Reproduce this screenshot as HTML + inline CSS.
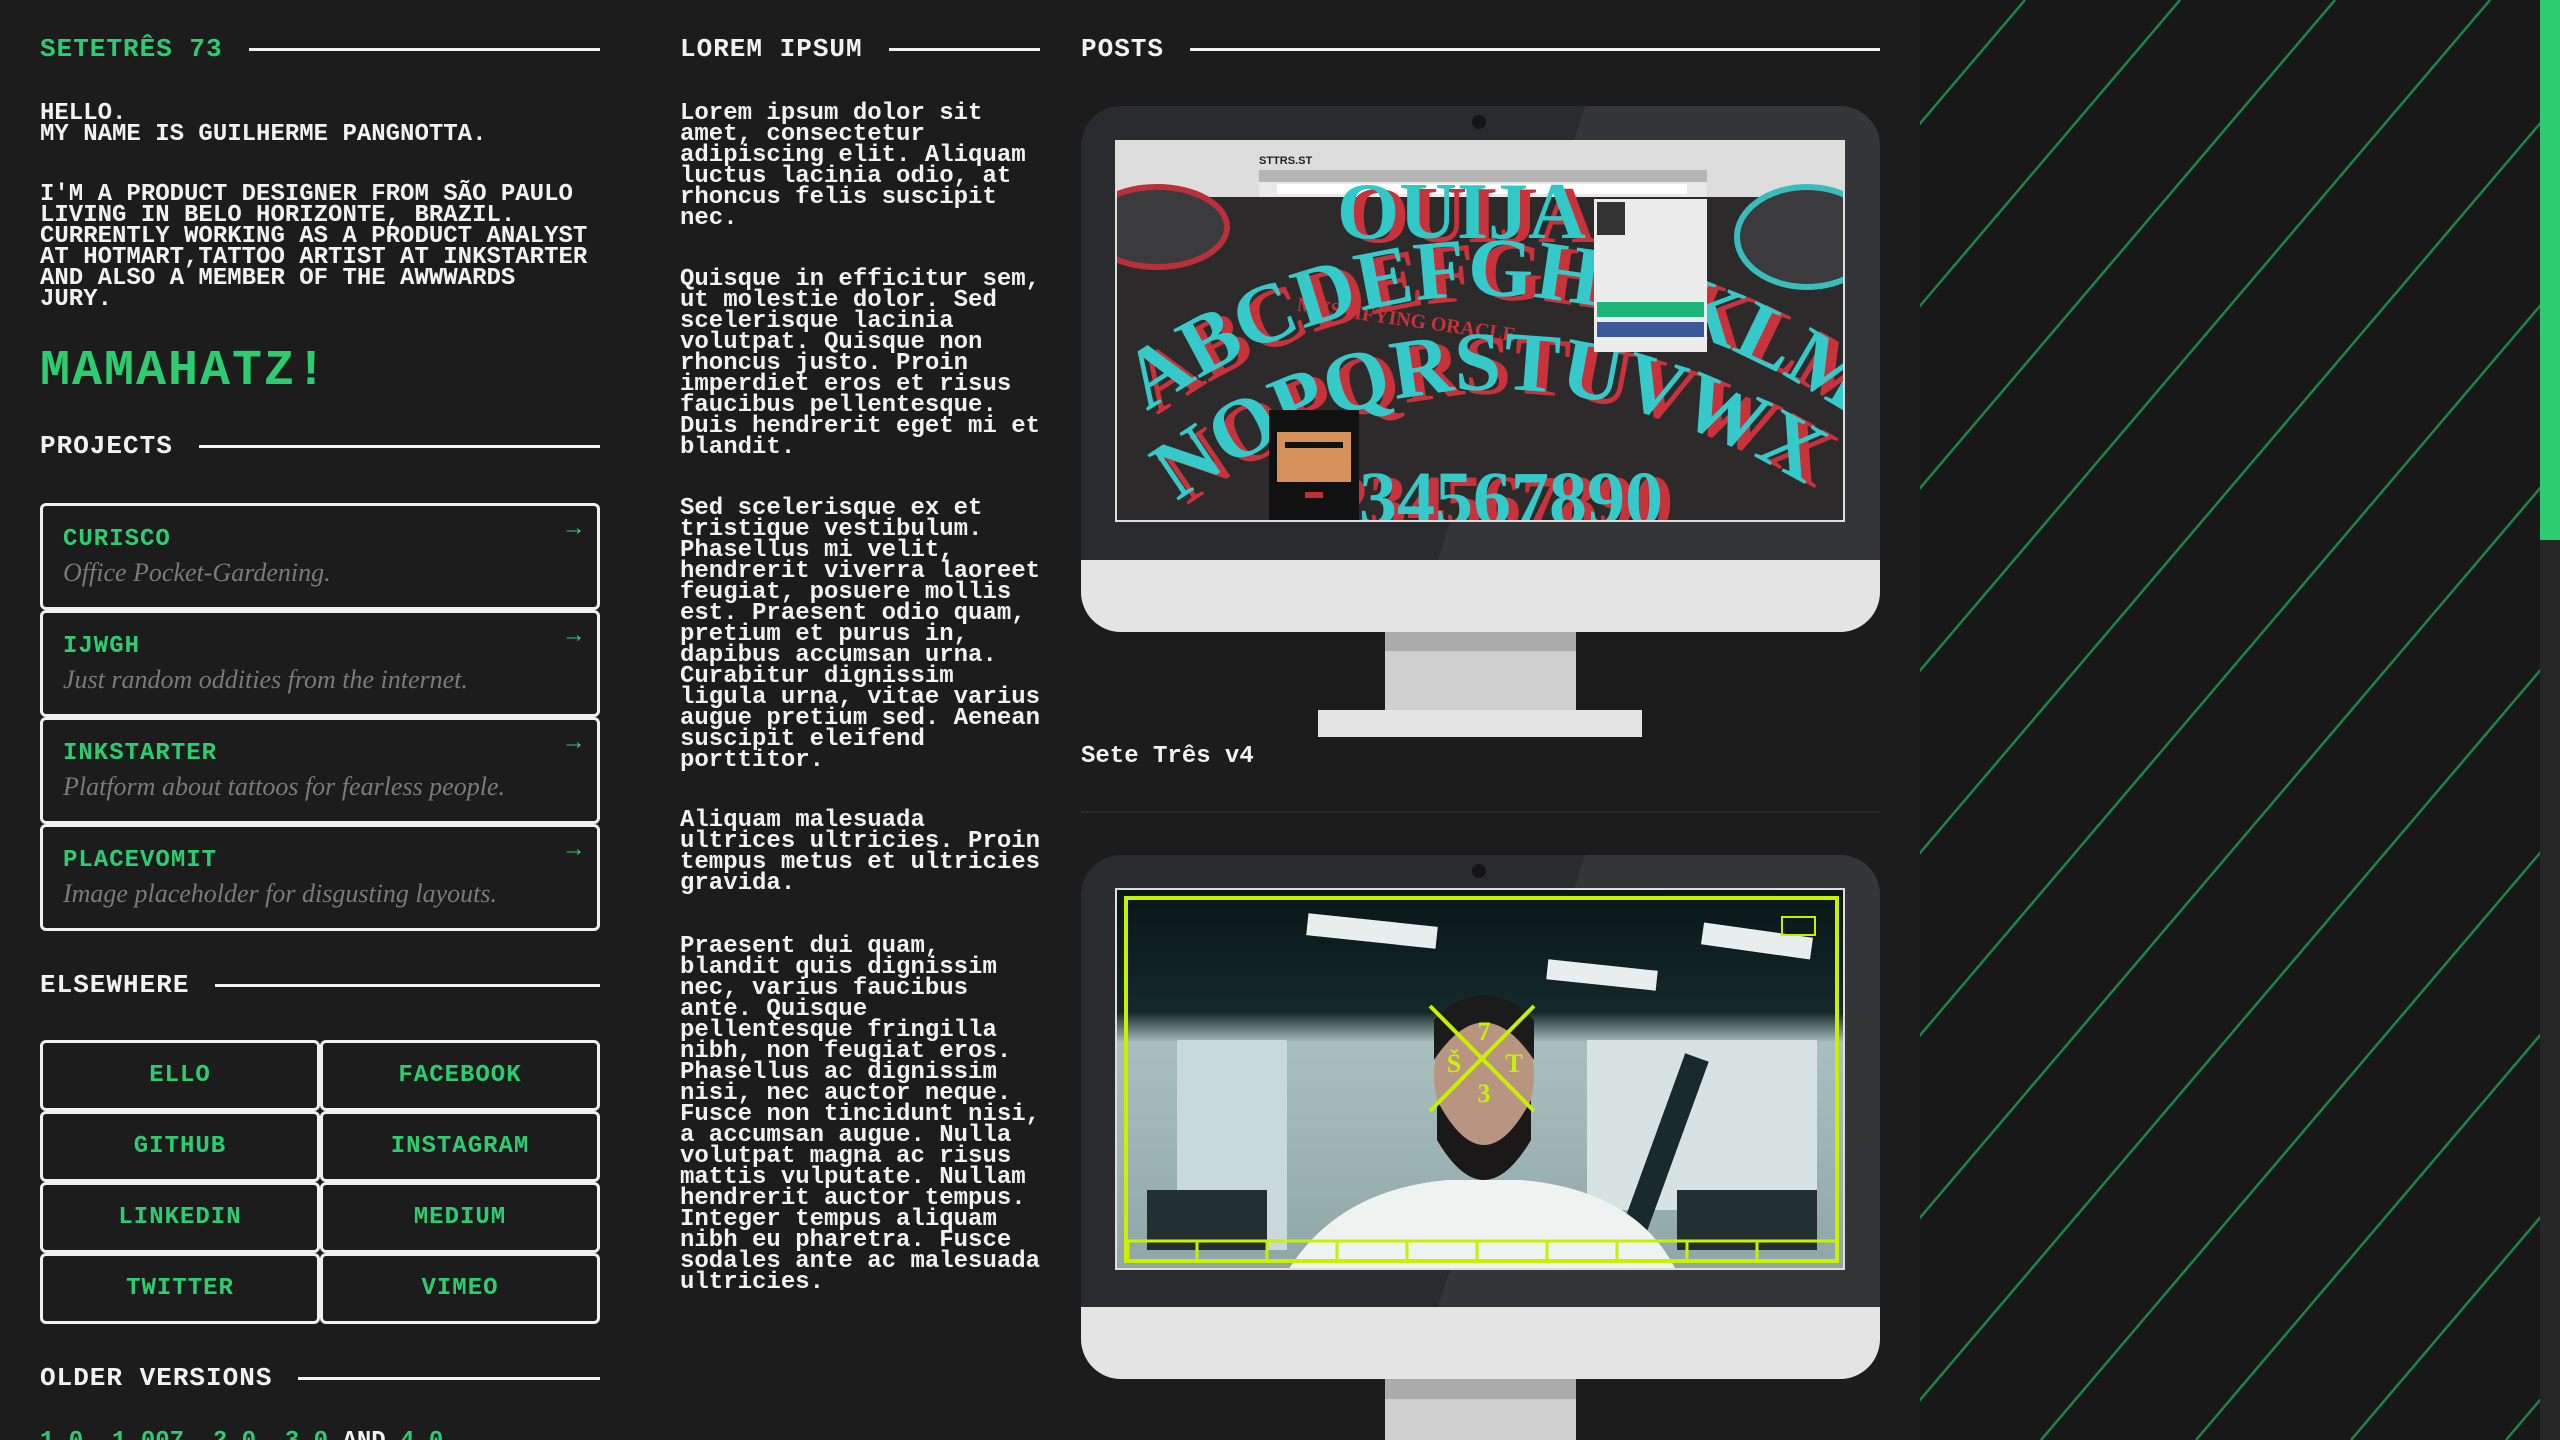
<!DOCTYPE html>
<html><head><meta charset="utf-8">
<style>
*{margin:0;padding:0;box-sizing:border-box}
html,body{width:2560px;height:1440px;overflow:hidden;background:#1c1c1c}
body{position:relative;font-family:"Liberation Mono",monospace;font-weight:bold;color:#f2f2f2}
.a{position:absolute}
.t{font-size:24px;line-height:21px;white-space:pre}
.g{color:#2ecc71}
.h{position:absolute;display:flex;align-items:center;font-size:26px;height:30px;letter-spacing:1px}
.h i{flex:1;height:3px;background:#f2f2f2;margin-left:26px}
.card{position:absolute;left:40px;width:560px;height:107px;border:3px solid #f0f0f0;border-radius:6px;background:#1c1c1c}
.card b{position:absolute;left:20px;top:20px;font-size:24px;color:#2ecc71;letter-spacing:1px}
.card em{position:absolute;left:20px;top:52px;font-family:"Liberation Serif",serif;font-style:italic;font-weight:normal;font-size:26px;color:#7a7a7a}
.card s{position:absolute;right:16px;top:10px;text-decoration:none;color:#2ecc71;font-size:24px;font-weight:normal}
.btn{position:absolute;width:280px;height:71px;border:3px solid #f0f0f0;border-radius:6px;color:#2ecc71;font-size:24px;display:flex;align-items:center;justify-content:center;letter-spacing:1px}
.mon{position:absolute;left:1081px;width:799px;border-radius:40px;overflow:hidden;background:#2a2b2e}
.mon .gl{position:absolute;left:0;top:0;right:0;bottom:0;background:linear-gradient(108deg,transparent 0 52%,rgba(255,255,255,.05) 52%)}
.mon .chin{position:absolute;left:0;right:0;bottom:0;height:72px;background:#e4e4e4}
.mon .cam{position:absolute;left:391px;width:14px;height:14px;border-radius:50%;background:#151515}
.scr{position:absolute;left:34px;width:730px;height:382px;border:2px solid #ddd;overflow:hidden}
</style></head><body>

<!-- stripes -->
<div class="a" style="left:1920px;top:0;width:620px;height:1440px;background:#181818;overflow:hidden">
<svg width="620" height="1440" style="position:absolute;left:0;top:0">
<g stroke="#1e8548" stroke-width="2.5" transform="translate(-1920,0)">
<line x1="1870" y1="0" x2="646" y2="1440"/><line x1="2025" y1="0" x2="801" y2="1440"/><line x1="2180" y1="0" x2="956" y2="1440"/><line x1="2335" y1="0" x2="1111" y2="1440"/><line x1="2490" y1="0" x2="1266" y2="1440"/><line x1="2645" y1="0" x2="1421" y2="1440"/><line x1="2800" y1="0" x2="1576" y2="1440"/><line x1="2955" y1="0" x2="1731" y2="1440"/><line x1="3110" y1="0" x2="1886" y2="1440"/><line x1="3265" y1="0" x2="2041" y2="1440"/><line x1="3420" y1="0" x2="2196" y2="1440"/><line x1="3575" y1="0" x2="2351" y2="1440"/><line x1="3730" y1="0" x2="2506" y2="1440"/><line x1="3885" y1="0" x2="2661" y2="1440"/>
</g></svg></div>
<div class="a" style="left:2540px;top:0;width:20px;height:1440px;background:#262626"></div>
<div class="a" style="left:2540px;top:0;width:20px;height:540px;background:#2ecc71"></div>

<!-- left column -->
<div class="h" style="left:40px;top:34px;width:560px"><span class="g">SETETRÊS 73</span><i></i></div>
<div class="a t" style="left:40px;top:103px">HELLO.
MY NAME IS GUILHERME PANGNOTTA.</div>
<div class="a t" style="left:40px;top:184px">I'M A PRODUCT DESIGNER FROM SÃO PAULO
LIVING IN BELO HORIZONTE, BRAZIL.
CURRENTLY WORKING AS A PRODUCT ANALYST
AT HOTMART,TATTOO ARTIST AT INKSTARTER
AND ALSO A MEMBER OF THE AWWWARDS
JURY.</div>
<div class="a g" style="left:40px;top:342px;font-size:50px;line-height:60px;letter-spacing:2px">MAMAHATZ!</div>
<div class="h" style="left:40px;top:431px;width:560px"><span>PROJECTS</span><i></i></div>

<div class="card" style="top:503px"><b>CURISCO</b><em>Office Pocket-Gardening.</em><s>→</s></div>
<div class="card" style="top:610px"><b>IJWGH</b><em>Just random oddities from the internet.</em><s>→</s></div>
<div class="card" style="top:717px"><b>INKSTARTER</b><em>Platform about tattoos for fearless people.</em><s>→</s></div>
<div class="card" style="top:824px"><b>PLACEVOMIT</b><em>Image placeholder for disgusting layouts.</em><s>→</s></div>

<div class="h" style="left:40px;top:970px;width:560px"><span>ELSEWHERE</span><i></i></div>
<div class="btn" style="left:40px;top:1040px">ELLO</div>
<div class="btn" style="left:320px;top:1040px">FACEBOOK</div>
<div class="btn" style="left:40px;top:1111px">GITHUB</div>
<div class="btn" style="left:320px;top:1111px">INSTAGRAM</div>
<div class="btn" style="left:40px;top:1182px">LINKEDIN</div>
<div class="btn" style="left:320px;top:1182px">MEDIUM</div>
<div class="btn" style="left:40px;top:1253px">TWITTER</div>
<div class="btn" style="left:320px;top:1253px">VIMEO</div>

<div class="h" style="left:40px;top:1363px;width:560px"><span>OLDER VERSIONS</span><i></i></div>
<div class="a t" style="left:40px;top:1431px"><span class="g">1.0, 1.007, 2.0, 3.0</span> AND <span class="g">4.0</span></div>

<!-- middle column -->
<div class="h" style="left:680px;top:34px;width:360px"><span>LOREM IPSUM</span><i></i></div>
<div class="a t" style="left:680px;top:103px">Lorem ipsum dolor sit
amet, consectetur
adipiscing elit. Aliquam
luctus lacinia odio, at
rhoncus felis suscipit
nec.</div>
<div class="a t" style="left:680px;top:269px">Quisque in efficitur sem,
ut molestie dolor. Sed
scelerisque lacinia
volutpat. Quisque non
rhoncus justo. Proin
imperdiet eros et risus
faucibus pellentesque.
Duis hendrerit eget mi et
blandit.</div>
<div class="a t" style="left:680px;top:498px">Sed scelerisque ex et
tristique vestibulum.
Phasellus mi velit,
hendrerit viverra laoreet
feugiat, posuere mollis
est. Praesent odio quam,
pretium et purus in,
dapibus accumsan urna.
Curabitur dignissim
ligula urna, vitae varius
augue pretium sed. Aenean
suscipit eleifend
porttitor.</div>
<div class="a t" style="left:680px;top:810px">Aliquam malesuada
ultrices ultricies. Proin
tempus metus et ultricies
gravida.</div>
<div class="a t" style="left:680px;top:936px">Praesent dui quam,
blandit quis dignissim
nec, varius faucibus
ante. Quisque
pellentesque fringilla
nibh, non feugiat eros.
Phasellus ac dignissim
nisi, nec auctor neque.
Fusce non tincidunt nisi,
a accumsan augue. Nulla
volutpat magna ac risus
mattis vulputate. Nullam
hendrerit auctor tempus.
Integer tempus aliquam
nibh eu pharetra. Fusce
sodales ante ac malesuada
ultricies.</div>

<!-- posts column -->
<div class="h" style="left:1081px;top:34px;width:799px"><span>POSTS</span><i></i></div>

<!-- monitor 1 -->
<div class="a" style="left:1385px;top:630px;width:191px;height:80px;background:#cfcfcf"></div>
<div class="a" style="left:1385px;top:630px;width:191px;height:21px;background:#ababab"></div>
<div class="a" style="left:1318px;top:710px;width:324px;height:27px;background:#e4e4e4"></div>
<div class="mon" style="top:106px;height:526px">
 <div class="gl"></div><div class="chin"></div><div class="cam" style="top:9px"></div>
 <div class="scr" style="top:34px;background:#2b2b2d">
  <svg width="730" height="382" viewBox="0 0 730 382" style="display:block">
   <defs>
    <path id="a1" d="M30 270 Q360 40 720 265"/>
    <path id="a2" d="M60 360 Q360 140 700 350"/>
   </defs>
   <rect x="0" y="0" width="730" height="55" fill="#dcdcdc"/>
   <rect x="142" y="28" width="448" height="12" fill="#b5b5b5"/>
   <rect x="142" y="40" width="448" height="15" fill="#e9e9e9"/>
   <rect x="160" y="42" width="410" height="10" fill="#fff"/>
   <text x="142" y="22" font-family="Liberation Sans" font-weight="bold" font-size="11" fill="#222">STTRS.ST</text>
   <rect x="0" y="55" width="730" height="327" fill="#2d2a2c"/>
   <ellipse cx="40" cy="85" rx="70" ry="40" fill="#3b3a3d" stroke="#b83038" stroke-width="6"/>
   <ellipse cx="690" cy="95" rx="70" ry="50" fill="#3b3a3d" stroke="#3bbcbc" stroke-width="6"/>
   <text x="230" y="100" font-family="Liberation Serif" font-weight="bold" font-size="80" fill="#c8323a">OUIJA</text>
   <text x="220" y="96" font-family="Liberation Serif" font-weight="bold" font-size="80" fill="#31c8c8">OUIJA</text>
   <text x="180" y="180" font-family="Liberation Serif" font-weight="bold" font-size="20" fill="#c8323a" transform="rotate(8 260 170)">MYSTIFYING ORACLE</text>
   <g font-family="Liberation Serif" font-weight="bold" font-size="84">
    <text fill="#c8323a" transform="translate(10,4)"><textPath href="#a1">ABCDEFGHIJKLM</textPath></text>
    <text fill="#36c9c9"><textPath href="#a1">ABCDEFGHIJKLM</textPath></text>
    <text fill="#c8323a" transform="translate(10,4)"><textPath href="#a2">NOPQRSTUVWXYZ</textPath></text>
    <text fill="#36c9c9"><textPath href="#a2">NOPQRSTUVWXYZ</textPath></text>
   </g>
   <g font-family="Liberation Serif" font-weight="bold" font-size="76">
    <text x="176" y="386" fill="#c8323a">1234567890</text>
    <text x="166" y="382" fill="#36c9c9">1234567890</text>
   </g>
   <rect x="477" y="57" width="113" height="153" fill="#ececec"/>
   <rect x="480" y="60" width="28" height="33" fill="#333"/>
   <rect x="480" y="160" width="107" height="15" fill="#1fb57a"/>
   <rect x="480" y="180" width="107" height="15" fill="#3b5998"/>
   <g>
    <rect x="152" y="268" width="90" height="114" fill="#111"/>
    <rect x="160" y="290" width="74" height="60" fill="#d6905a"/>
    <rect x="168" y="300" width="58" height="6" fill="#111"/>
    <rect x="160" y="340" width="74" height="42" fill="#111"/>
    <rect x="188" y="350" width="18" height="6" fill="#c03030"/>
   </g>
  </svg>
 </div>
</div>
<div class="a" style="left:1081px;top:744px;font-size:24px;line-height:26px;white-space:pre">Sete Três v4</div>
<div class="a" style="left:1081px;top:811px;width:799px;height:2px;background:#2a2a2a"></div>

<!-- monitor 2 -->
<div class="a" style="left:1385px;top:1376px;width:191px;height:64px;background:#cfcfcf"></div>
<div class="a" style="left:1385px;top:1376px;width:191px;height:23px;background:#ababab"></div>
<div class="mon" style="top:855px;height:524px">
 <div class="gl"></div><div class="chin"></div><div class="cam" style="top:9px"></div>
 <div class="scr" style="top:33px;height:382px;background:#9fb4b4">
  <svg width="730" height="382" viewBox="0 0 730 382" style="display:block">
   <defs><linearGradient id="bg2" x1="0" y1="0" x2="0" y2="1">
    <stop offset="0" stop-color="#0a1618"/><stop offset=".32" stop-color="#14282a"/><stop offset=".4" stop-color="#a9bfbf"/><stop offset="1" stop-color="#8fa6a8"/></linearGradient></defs>
   <rect width="730" height="382" fill="url(#bg2)"/>
   <rect x="190" y="30" width="130" height="22" fill="#e8eeee" transform="rotate(6 255 41)"/>
   <rect x="585" y="40" width="110" height="22" fill="#e8eeee" transform="rotate(8 640 51)"/>
   <rect x="430" y="75" width="110" height="20" fill="#e8eeee" transform="rotate(6 485 85)"/>
   <rect x="60" y="150" width="110" height="210" fill="#c9d8d8"/>
   <rect x="470" y="150" width="230" height="170" fill="#d7e2e2"/>
   <rect x="530" y="160" width="25" height="220" fill="#1a2a2c" transform="rotate(20 540 270)"/>
   <rect x="30" y="300" width="120" height="60" fill="#233032"/>
   <rect x="560" y="300" width="140" height="60" fill="#233032"/>
   <ellipse cx="367" cy="185" rx="50" ry="70" fill="#b79580"/>
   <path d="M317 170 Q367 95 417 170 L417 130 Q367 80 317 130Z" fill="#1b1b1b"/>
   <path d="M320 210 Q367 300 414 210 L414 250 Q367 330 320 250Z" fill="#1a1818"/>
   <path d="M170 382 Q220 300 330 290 L404 290 Q520 300 560 382Z" fill="#eef3f2"/>
   <rect x="9" y="8" width="711" height="363" fill="none" stroke="#c8f000" stroke-width="4"/>
   <line x1="313" y1="116" x2="417" y2="221" stroke="#c8f000" stroke-width="4"/>
   <line x1="417" y1="116" x2="313" y2="221" stroke="#c8f000" stroke-width="4"/>
   <g font-family="Liberation Serif" font-weight="bold" font-size="26" fill="#c8f000" text-anchor="middle">
    <text x="367" y="150">7</text><text x="337" y="182">Š</text><text x="397" y="182">T</text><text x="367" y="212">3</text></g>
   <rect x="665" y="27" width="33" height="18" fill="none" stroke="#c8f000" stroke-width="2"/>
   <g fill="none" stroke="#c8f000" stroke-width="3">
    <rect x="11" y="351" width="709" height="20"/>
    <line x1="80" y1="351" x2="80" y2="371"/><line x1="150" y1="351" x2="150" y2="371"/><line x1="220" y1="351" x2="220" y2="371"/><line x1="290" y1="351" x2="290" y2="371"/><line x1="360" y1="351" x2="360" y2="371"/><line x1="430" y1="351" x2="430" y2="371"/><line x1="500" y1="351" x2="500" y2="371"/><line x1="570" y1="351" x2="570" y2="371"/><line x1="640" y1="351" x2="640" y2="371"/>
   </g>
  </svg>
 </div>
</div>
</body></html>
